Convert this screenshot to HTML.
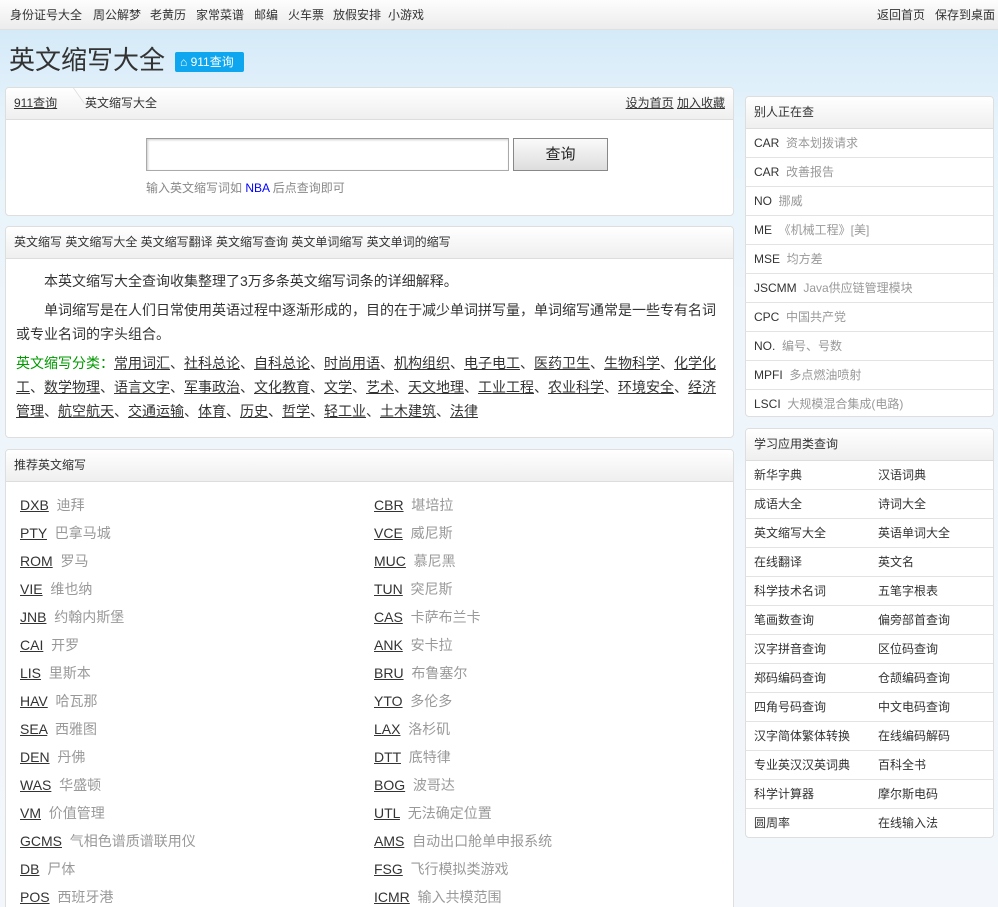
<!DOCTYPE html>
<html style="width:998px;height:907px;overflow:hidden"><head><meta charset="utf-8">
<style>
*{margin:0;padding:0;box-sizing:border-box}
body{width:998px;height:907px;overflow:hidden;font-family:"Liberation Sans","Noto Sans CJK SC",sans-serif;font-size:12px;color:#333;background:linear-gradient(180deg,#cfe7f7 0,#e6f3fb 120px,#eef5fb 300px,#f3f7fb 100%);position:relative}
a{color:#333}
.top{position:absolute;left:0;top:0;width:998px;height:30px;background:linear-gradient(#fdfdfd,#ececec);border-bottom:1px solid #e0e0e0;font-size:12px;line-height:30px}
.top span{position:absolute;top:0;white-space:nowrap}
.title{position:absolute;left:9px;top:40px;font-size:26px;color:#333;line-height:40px;white-space:nowrap}
.badge{position:absolute;left:175px;top:52px;width:69px;height:20px;background:#0ea6ee;color:#fff;font-size:12px;line-height:20px;padding-left:5px;border-radius:2px;white-space:nowrap}
.panel{position:absolute;background:#fff;border:1px solid #dedede;border-radius:4px;overflow:hidden}
.ph{height:32px;background:linear-gradient(#fff,#efefef);border-bottom:1px solid #ddd;line-height:31px;padding-left:8px;font-size:12px;white-space:nowrap}
.row{position:absolute;font-size:14px;white-space:nowrap;line-height:18px}
.gray{color:#999}
.sr{height:29px;border-bottom:1px solid #e3e3e3;line-height:29px;padding-left:8px;font-size:12px;white-space:nowrap}
.sr2{height:29px;border-bottom:1px solid #e3e3e3;line-height:29px;font-size:12px;position:relative}
.sr2 span{position:absolute;top:0;white-space:nowrap}
u{text-decoration:underline}
</style></head><body>
<div class="top">
<span style="left:10px">身份证号大全</span><span style="left:93px">周公解梦</span><span style="left:150px">老黄历</span><span style="left:196px">家常菜谱</span><span style="left:254px">邮编</span><span style="left:288px">火车票</span><span style="left:333px">放假安排</span><span style="left:388px">小游戏</span>
<span style="left:877px">返回首页</span><span style="left:935px">保存到桌面</span>
</div>
<div class="title">英文缩写大全</div>
<div class="badge">&#8962; 911查询</div>

<div class="panel" style="left:5px;top:87px;width:729px;height:129px">
 <div class="ph" style="position:relative"><u>911查询</u><span style="position:absolute;left:79px">英文缩写大全</span><span style="position:absolute;left:52px;top:0;width:16px;height:31px;border-right:1px solid #ddd;transform:skewX(35deg) scaleY(.5);transform-origin:top"></span><span style="position:absolute;right:8px"><u>设为首页</u> <u>加入收藏</u></span></div>
 <div style="position:absolute;left:140px;top:50px;width:363px;height:33px;border:1px solid #aaa;border-top-color:#999;box-shadow:inset 1px 1px 2px #ccc"></div>
 <div style="position:absolute;left:507px;top:50px;width:95px;height:33px;border:1px solid #888;background:linear-gradient(#fafafa,#ddd);text-align:center;line-height:31px;font-size:15px;color:#222">查询</div>
 <div style="position:absolute;left:140px;top:91px;color:#888;white-space:nowrap">输入英文缩写词如 <span style="color:#00f">NBA</span> 后点查询即可</div>
</div>

<div class="panel" style="left:5px;top:226px;width:729px;height:212px">
 <div class="ph">英文缩写 英文缩写大全 英文缩写翻译 英文缩写查询 英文单词缩写 英文单词的缩写</div>
 <div style="padding:10px 10px 0 10px;font-size:14px;line-height:24px">
 <p style="text-indent:28px;margin-bottom:5px">本英文缩写大全查询收集整理了3万多条英文缩写词条的详细解释。</p>
 <p style="text-indent:28px;margin-bottom:5px">单词缩写是在人们日常使用英语过程中逐渐形成的，目的在于减少单词拼写量，单词缩写通常是一些专有名词或专业名词的字头组合。</p>
 <p><span style="color:#090">英文缩写分类：</span><u>常用词汇</u>、<u>社科总论</u>、<u>自科总论</u>、<u>时尚用语</u>、<u>机构组织</u>、<u>电子电工</u>、<u>医药卫生</u>、<u>生物科学</u>、<u>化学化工</u>、<u>数学物理</u>、<u>语言文字</u>、<u>军事政治</u>、<u>文化教育</u>、<u>文学</u>、<u>艺术</u>、<u>天文地理</u>、<u>工业工程</u>、<u>农业科学</u>、<u>环境安全</u>、<u>经济管理</u>、<u>航空航天</u>、<u>交通运输</u>、<u>体育</u>、<u>历史</u>、<u>哲学</u>、<u>轻工业</u>、<u>土木建筑</u>、<u>法律</u></p>
 </div>
</div>

<div class="panel" style="left:5px;top:449px;width:729px;height:470px">
 <div class="ph">推荐英文缩写</div>
</div>

<div class="panel" style="left:745px;top:96px;width:249px;height:321px">
 <div class="ph">别人正在查</div>
 <div class="sr">CAR <span class="gray">&nbsp;资本划拨请求</span></div>
 <div class="sr">CAR <span class="gray">&nbsp;改善报告</span></div>
 <div class="sr">NO <span class="gray">&nbsp;挪威</span></div>
 <div class="sr">ME <span class="gray">&nbsp;《机械工程》[美]</span></div>
 <div class="sr">MSE <span class="gray">&nbsp;均方差</span></div>
 <div class="sr">JSCMM <span class="gray">&nbsp;Java供应链管理模块</span></div>
 <div class="sr">CPC <span class="gray">&nbsp;中国共产党</span></div>
 <div class="sr">NO. <span class="gray">&nbsp;编号、号数</span></div>
 <div class="sr">MPFI <span class="gray">&nbsp;多点燃油喷射</span></div>
 <div class="sr" style="border:0">LSCI <span class="gray">&nbsp;大规模混合集成(电路)</span></div>
</div>

<div class="panel" style="left:745px;top:428px;width:249px;height:410px">
 <div class="ph">学习应用类查询</div>
 <div class="sr2"><span style="left:8px">新华字典</span><span style="left:132px">汉语词典</span></div>
 <div class="sr2"><span style="left:8px">成语大全</span><span style="left:132px">诗词大全</span></div>
 <div class="sr2"><span style="left:8px">英文缩写大全</span><span style="left:132px">英语单词大全</span></div>
 <div class="sr2"><span style="left:8px">在线翻译</span><span style="left:132px">英文名</span></div>
 <div class="sr2"><span style="left:8px">科学技术名词</span><span style="left:132px">五笔字根表</span></div>
 <div class="sr2"><span style="left:8px">笔画数查询</span><span style="left:132px">偏旁部首查询</span></div>
 <div class="sr2"><span style="left:8px">汉字拼音查询</span><span style="left:132px">区位码查询</span></div>
 <div class="sr2"><span style="left:8px">郑码编码查询</span><span style="left:132px">仓颉编码查询</span></div>
 <div class="sr2"><span style="left:8px">四角号码查询</span><span style="left:132px">中文电码查询</span></div>
 <div class="sr2"><span style="left:8px">汉字简体繁体转换</span><span style="left:132px">在线编码解码</span></div>
 <div class="sr2"><span style="left:8px">专业英汉汉英词典</span><span style="left:132px">百科全书</span></div>
 <div class="sr2"><span style="left:8px">科学计算器</span><span style="left:132px">摩尔斯电码</span></div>
 <div class="sr2" style="border:0"><span style="left:8px">圆周率</span><span style="left:132px">在线输入法</span></div>
</div>

<div class="row" style="left:20px;top:496px"><u>DXB</u> <span class="gray">&nbsp;迪拜</span></div>
<div class="row" style="left:374px;top:496px"><u>CBR</u> <span class="gray">&nbsp;堪培拉</span></div>
<div class="row" style="left:20px;top:524px"><u>PTY</u> <span class="gray">&nbsp;巴拿马城</span></div>
<div class="row" style="left:374px;top:524px"><u>VCE</u> <span class="gray">&nbsp;威尼斯</span></div>
<div class="row" style="left:20px;top:552px"><u>ROM</u> <span class="gray">&nbsp;罗马</span></div>
<div class="row" style="left:374px;top:552px"><u>MUC</u> <span class="gray">&nbsp;慕尼黑</span></div>
<div class="row" style="left:20px;top:580px"><u>VIE</u> <span class="gray">&nbsp;维也纳</span></div>
<div class="row" style="left:374px;top:580px"><u>TUN</u> <span class="gray">&nbsp;突尼斯</span></div>
<div class="row" style="left:20px;top:608px"><u>JNB</u> <span class="gray">&nbsp;约翰内斯堡</span></div>
<div class="row" style="left:374px;top:608px"><u>CAS</u> <span class="gray">&nbsp;卡萨布兰卡</span></div>
<div class="row" style="left:20px;top:636px"><u>CAI</u> <span class="gray">&nbsp;开罗</span></div>
<div class="row" style="left:374px;top:636px"><u>ANK</u> <span class="gray">&nbsp;安卡拉</span></div>
<div class="row" style="left:20px;top:664px"><u>LIS</u> <span class="gray">&nbsp;里斯本</span></div>
<div class="row" style="left:374px;top:664px"><u>BRU</u> <span class="gray">&nbsp;布鲁塞尔</span></div>
<div class="row" style="left:20px;top:692px"><u>HAV</u> <span class="gray">&nbsp;哈瓦那</span></div>
<div class="row" style="left:374px;top:692px"><u>YTO</u> <span class="gray">&nbsp;多伦多</span></div>
<div class="row" style="left:20px;top:720px"><u>SEA</u> <span class="gray">&nbsp;西雅图</span></div>
<div class="row" style="left:374px;top:720px"><u>LAX</u> <span class="gray">&nbsp;洛杉矶</span></div>
<div class="row" style="left:20px;top:748px"><u>DEN</u> <span class="gray">&nbsp;丹佛</span></div>
<div class="row" style="left:374px;top:748px"><u>DTT</u> <span class="gray">&nbsp;底特律</span></div>
<div class="row" style="left:20px;top:776px"><u>WAS</u> <span class="gray">&nbsp;华盛顿</span></div>
<div class="row" style="left:374px;top:776px"><u>BOG</u> <span class="gray">&nbsp;波哥达</span></div>
<div class="row" style="left:20px;top:804px"><u>VM</u> <span class="gray">&nbsp;价值管理</span></div>
<div class="row" style="left:374px;top:804px"><u>UTL</u> <span class="gray">&nbsp;无法确定位置</span></div>
<div class="row" style="left:20px;top:832px"><u>GCMS</u> <span class="gray">&nbsp;气相色谱质谱联用仪</span></div>
<div class="row" style="left:374px;top:832px"><u>AMS</u> <span class="gray">&nbsp;自动出口舱单申报系统</span></div>
<div class="row" style="left:20px;top:860px"><u>DB</u> <span class="gray">&nbsp;尸体</span></div>
<div class="row" style="left:374px;top:860px"><u>FSG</u> <span class="gray">&nbsp;飞行模拟类游戏</span></div>
<div class="row" style="left:20px;top:888px"><u>POS</u> <span class="gray">&nbsp;西班牙港</span></div>
<div class="row" style="left:374px;top:888px"><u>ICMR</u> <span class="gray">&nbsp;输入共模范围</span></div>
</body></html>
